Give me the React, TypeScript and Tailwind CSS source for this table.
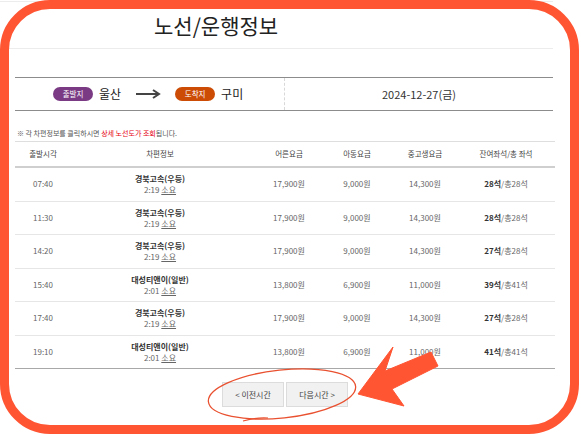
// Bus route / schedule info screenshot with annotation overlay
import React from 'react';

type Trip = {
  time: string;
  company: string;
  duration: string;
  adult: string;
  child: string;
  teen: string;
  left: string;
  total: string;
};

const trips: Trip[] = [
  { time: '07:40', company: '경북고속(우등)', duration: '2:19', adult: '17,900원', child: '9,000원', teen: '14,300원', left: '28석', total: '28석' },
  { time: '11:30', company: '경북고속(우등)', duration: '2:19', adult: '17,900원', child: '9,000원', teen: '14,300원', left: '28석', total: '28석' },
  { time: '14:20', company: '경북고속(우등)', duration: '2:19', adult: '17,900원', child: '9,000원', teen: '14,300원', left: '27석', total: '28석' },
  { time: '15:40', company: '대성티앤이(일반)', duration: '2:01', adult: '13,800원', child: '6,900원', teen: '11,000원', left: '39석', total: '41석' },
  { time: '17:40', company: '경북고속(우등)', duration: '2:19', adult: '17,900원', child: '9,000원', teen: '14,300원', left: '27석', total: '28석' },
  { time: '19:10', company: '대성티앤이(일반)', duration: '2:01', adult: '13,800원', child: '6,900원', teen: '11,000원', left: '41석', total: '41석' },
];

const cols = 'grid grid-cols-[56px_178px_80px_56px_80px_82px] items-center text-center';

const Annotations: React.FC = () => (
  <>
    {/* rounded orange frame */}
    <div className="pointer-events-none absolute left-0 top-0 w-[579px] h-[434px] rounded-[50px] border-[9px] border-[#ff5533]" />
    <svg className="pointer-events-none absolute left-0 top-0" width="581" height="434" viewBox="0 0 581 434">
      <ellipse cx="282" cy="394" rx="74" ry="24" transform="rotate(-6 282 394)" fill="none" stroke="#e9502f" strokeWidth="1.3" />
      <path d="M243 421 Q 258 417 268 418" fill="none" stroke="#e9502f" strokeWidth="1.2" />
      <polygon
        points="358,394 393,347 385,371 431,352 438,366 392,389 404,406"
        fill="#ff5533"
        stroke="#ff5533"
        strokeWidth="1"
        strokeLinejoin="round"
      />
    </svg>
  </>
);

export default function App() {
  return (
    <div className="relative w-[581px] h-[434px] overflow-hidden bg-white font-['Noto_Sans_CJK_KR',sans-serif] text-[#333]">
      {/* page header */}
      <div className="mt-px w-[553px] h-[48px] border-t border-b border-[#ececec] flex items-center pl-[154px]">
        <h1 className="text-[21px] leading-none text-[#222]">노선/운행정보</h1>
      </div>

      <div className="ml-[15px] w-[540px] mt-[28px]">
        {/* route box */}
        <div className="w-[538px] h-[34px] border-t border-b border-[#8c8c8c] flex">
          <div className="w-[269px] flex items-center pl-[38px]">
            <span className="w-[40px] h-[14px] rounded-full bg-[#7a3b84] text-white text-[7.5px] leading-[14px] text-center">출발지</span>
            <span className="ml-[6px] text-[12px] leading-none text-[#222]">울산</span>
            <svg className="ml-[15px]" width="25" height="10" viewBox="0 0 25 10">
              <line x1="0" y1="5" x2="23" y2="5" stroke="#444" strokeWidth="2" />
              <polyline points="17,1 23,5 17,9" fill="none" stroke="#444" strokeWidth="2" />
            </svg>
            <span className="ml-[14px] w-[40px] h-[14px] rounded-full bg-[#cc4c06] text-white text-[7.5px] leading-[14px] text-center">도착지</span>
            <span className="ml-[6px] text-[12px] leading-none text-[#222]">구미</span>
          </div>
          <div className="flex-1 border-l border-dashed border-[#d8d8d8] flex items-center justify-center text-[11px] text-[#333]">
            2024-12-27(금)
          </div>
        </div>

        {/* notice */}
        <div className="h-[30px] pt-[17px] pl-[2px] text-[7px] leading-[10px] text-[#555]">
          ※ 각 차편정보를 클릭하시면 <span className="text-[#e60012]">상세 노선도가 조회</span>됩니다.
        </div>

        {/* table */}
        <div className="border-t border-[#dedede]">
          <div className={`${cols} h-[26px] border-b-2 border-[#cfcfcf] text-[7.5px] text-[#444]`}>
            <span>출발시각</span>
            <span>차편정보</span>
            <span>어른요금</span>
            <span>아동요금</span>
            <span>중고생요금</span>
            <span>잔여좌석/총 좌석</span>
          </div>
          {trips.map((t, i) => (
            <div
              key={t.time}
              className={`${cols} h-[33.5px] border-b text-[8px] text-[#666] ${i === trips.length - 1 ? 'border-[#a8a8a8]' : 'border-[#e6e6e6]'}`}
            >
              <span>{t.time}</span>
              <div className="flex flex-col leading-[11px]">
                <span className="font-bold text-[#333]">{t.company}</span>
                <span>
                  {t.duration} <span className="underline">소요</span>
                </span>
              </div>
              <span>{t.adult}</span>
              <span>{t.child}</span>
              <span>{t.teen}</span>
              <span>
                <span className="font-bold text-[#333]">{t.left}</span>/총{t.total}
              </span>
            </div>
          ))}
        </div>

        {/* paging */}
        <div className="mt-[13px] flex justify-center gap-[2px]">
          <button className="w-[62px] h-[25px] bg-[#f1f1f1] border border-[#dcdcdc] text-[8px] text-[#444]">
            &lt; 이전시간
          </button>
          <button className="w-[62px] h-[25px] bg-[#f1f1f1] border border-[#dcdcdc] text-[8px] text-[#444]">
            다음시간 &gt;
          </button>
        </div>
      </div>

      <Annotations />
    </div>
  );
}
